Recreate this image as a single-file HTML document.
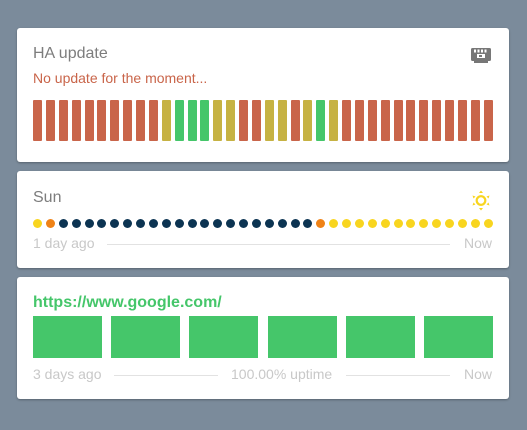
<!DOCTYPE html>
<html><head><meta charset="utf-8"><style>
*{margin:0;padding:0;box-sizing:border-box}
body{width:527px;height:430px;background:#7b8b9b;font-family:"Liberation Sans",sans-serif;position:relative;overflow:hidden}
.card{position:absolute;left:17px;width:492px;background:#fff;border-radius:3px;box-shadow:0 1px 2px rgba(0,0,0,.3)}
.t{position:absolute;left:16px;font-size:16px;color:#7d7d7d}
.row{position:absolute;left:16px;width:460px;display:flex;justify-content:space-between}
.b{width:9px;height:41px;border-radius:1px}
.r{background:#c9654a}.y{background:#c6b243}.g{background:#45c66a}
.d{width:9px;height:9px;border-radius:50%}
.s{background:#f8d51f}.o{background:#ef8216}.k{background:#0c3452}
.ft{position:absolute;font-size:14px;color:#c8c8c8}
.ln{position:absolute;height:1px;background:#e2e2e2}
.blk{width:69px;height:42px;background:#45c66a}
</style></head><body>
<div class="card" style="top:28px;height:134px">
<div class="t" style="top:17px">HA update</div>
<div style="position:absolute;left:16px;top:42px;font-size:14px;color:#c9654a">No update for the moment...</div>
<svg style="position:absolute;left:454px;top:19px" width="20" height="17" viewBox="0 0 20 17"><rect x="0" y="1" width="20" height="13" rx="1.5" fill="#777"/><rect x="3" y="2.5" width="2" height="3" fill="#fff"/><rect x="6.5" y="2.5" width="2" height="3" fill="#fff"/><rect x="10" y="2.5" width="2" height="3" fill="#fff"/><rect x="13.5" y="2.5" width="2" height="3" fill="#fff"/><rect x="6" y="7" width="8" height="4" fill="#fff"/><rect x="8" y="8" width="3" height="2" fill="#777"/><rect x="3" y="14" width="14" height="2" fill="#777"/></svg>
<div class="row" style="top:72px">
<i class="b r"></i><i class="b r"></i><i class="b r"></i><i class="b r"></i><i class="b r"></i><i class="b r"></i><i class="b r"></i><i class="b r"></i><i class="b r"></i><i class="b r"></i>
<i class="b y"></i><i class="b g"></i><i class="b g"></i><i class="b g"></i><i class="b y"></i><i class="b y"></i><i class="b r"></i><i class="b r"></i><i class="b y"></i><i class="b y"></i><i class="b r"></i><i class="b y"></i><i class="b g"></i><i class="b y"></i>
<i class="b r"></i><i class="b r"></i><i class="b r"></i><i class="b r"></i><i class="b r"></i><i class="b r"></i><i class="b r"></i><i class="b r"></i><i class="b r"></i><i class="b r"></i><i class="b r"></i><i class="b r"></i>
</div>
</div>
<div class="card" style="top:171px;height:97px">
<div class="t" style="top:18px">Sun</div>
<svg style="position:absolute;left:454px;top:19px" width="20" height="21" viewBox="0 0 20 21"><circle cx="10" cy="10.5" r="4.3" fill="none" stroke="#f8d51f" stroke-width="2.2"/><path d="M10 0.5l-2 2.5h4zM10 20.5l-2-2.5h4zM1.5 5.5l1 3 2-2zM18.5 5.5l-1 3-2-2zM1.5 15.5l1-3 2 2zM18.5 15.5l-1-3-2 2z" fill="#f8d51f"/></svg>
<div class="row" style="top:48px">
<i class="d s"></i><i class="d o"></i>
<i class="d k"></i><i class="d k"></i><i class="d k"></i><i class="d k"></i><i class="d k"></i><i class="d k"></i><i class="d k"></i><i class="d k"></i><i class="d k"></i><i class="d k"></i><i class="d k"></i><i class="d k"></i><i class="d k"></i><i class="d k"></i><i class="d k"></i><i class="d k"></i><i class="d k"></i><i class="d k"></i><i class="d k"></i><i class="d k"></i>
<i class="d o"></i>
<i class="d s"></i><i class="d s"></i><i class="d s"></i><i class="d s"></i><i class="d s"></i><i class="d s"></i><i class="d s"></i><i class="d s"></i><i class="d s"></i><i class="d s"></i><i class="d s"></i><i class="d s"></i><i class="d s"></i>
</div>
<div class="ft" style="left:16px;top:64px">1 day ago</div>
<div class="ln" style="left:90px;width:343px;top:73px"></div>
<div class="ft" style="left:447px;top:64px">Now</div>
</div>
<div class="card" style="top:277px;height:122px">
<div style="position:absolute;left:16px;top:17px;font-size:16px;font-weight:bold;color:#45c66a">https://www.google.com/</div>
<div class="row" style="top:39px"><i class="blk"></i><i class="blk"></i><i class="blk"></i><i class="blk"></i><i class="blk"></i><i class="blk"></i></div>
<div class="ft" style="left:16px;top:89px">3 days ago</div>
<div class="ln" style="left:97px;width:104px;top:98px"></div>
<div class="ft" style="left:214px;top:89px">100.00% uptime</div>
<div class="ln" style="left:329px;width:104px;top:98px"></div>
<div class="ft" style="left:447px;top:89px">Now</div>
</div>
</body></html>
